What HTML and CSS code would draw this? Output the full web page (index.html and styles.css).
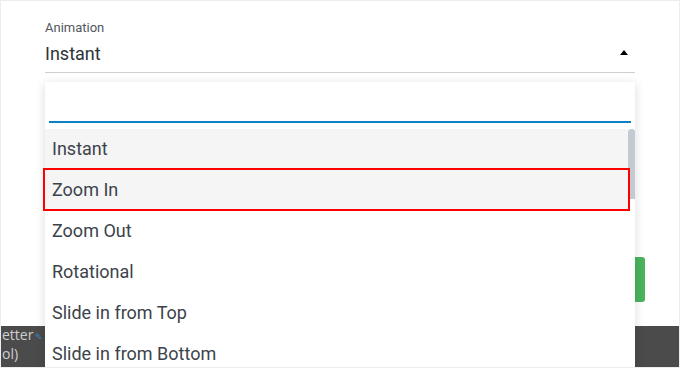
FILE: index.html
```html
<!DOCTYPE html>
<html>
<head>
<meta charset="utf-8">
<link rel="stylesheet" href="styles.css">
</head>
<body>
<div class="page">
  <div class="field">
    <div class="label">Animation</div>
    <div class="select">
      <span class="value">Instant</span>
      <span class="arrow"></span>
    </div>
  </div>
  <div class="btn-row">
    <div class="green-btn"></div>
  </div>
  <div class="footer">
    <div class="footer-text">
      <div class="ft-line">etter<span class="pencil">✎</span></div>
      <div class="ft-line">ol)</div>
    </div>
  </div>

  <div class="dropdown">
    <div class="search"><div class="search-input"></div></div>
    <div class="list">
      <div class="options">
        <div class="opt hl">Instant</div>
        <div class="opt hl">Zoom In</div>
        <div class="opt">Zoom Out</div>
        <div class="opt">Rotational</div>
        <div class="opt">Slide in from Top</div>
        <div class="opt">Slide in from Bottom</div>
      </div>
      <div class="scrollbar"><div class="thumb"></div></div>
    </div>
    <div class="redbox"></div>
  </div>
</div>
</body>
</html>
```

FILE: styles.css
```css
html, body {
  margin: 0;
  padding: 0;
  background: #fff;
}
.page {
  position: relative;
  width: 678px;
  height: 366px;
  border: 1px solid #ececec;
  overflow: hidden;
  display: flex;
  flex-direction: column;
  font-family: Roboto, "Liberation Sans", sans-serif;
  background: #fff;
}
.field {
  margin-left: 44px;
  width: 590px;
  padding-top: 19px;
}
.label {
  font-size: 13px;
  line-height: 16px;
  color: #50575e;
}
.select {
  display: flex;
  align-items: center;
  justify-content: space-between;
  padding: 7px 0;
  border-bottom: 1px solid #cfcfcf;
}
.value {
  font-size: 18px;
  line-height: 22px;
  color: #2c3338;
}
.arrow {
  width: 0;
  height: 0;
  border-left: 4px solid transparent;
  border-right: 4px solid transparent;
  border-bottom: 5px solid #000;
  margin-right: 7px;
  margin-top: -3px;
}
.btn-row {
  display: flex;
  justify-content: flex-end;
  margin-top: 184px;
  padding-right: 34px;
}
.green-btn {
  width: 120px;
  height: 45px;
  background: #4ab45c;
  border-radius: 3px;
}
.footer {
  margin-top: auto;
  height: 41px;
  background: #4b4b4b;
  display: flex;
}
.footer-text {
  width: 43px;
  padding-left: 1px;
}
.ft-line {
  white-space: nowrap;
  font-size: 14px;
  line-height: 17px;
  color: #cfcfcf;
  font-family: "Open Sans", "Liberation Sans", sans-serif;
}
.pencil {
  color: #3a88c2;
  font-size: 9px;
  margin-left: 2px;
}
.dropdown {
  position: absolute;
  left: 44px;
  top: 81px;
  width: 590px;
  height: 300px;
  background: #fff;
  box-shadow: 0 2px 10px rgba(0, 0, 0, 0.14);
}
.search {
  height: 47px;
  padding: 0 4px;
  box-sizing: border-box;
}
.search-input {
  height: 39px;
  border-bottom: 2px solid #0b82c4;
}
.list {
  display: flex;
}
.options {
  flex: 1;
}
.opt {
  height: 41px;
  line-height: 40px;
  padding-left: 7px;
  font-size: 18px;
  color: #3c434a;
}
.opt.hl {
  background: #f5f5f5;
}
.scrollbar {
  width: 7px;
}
.thumb {
  height: 70px;
  background: #c3cbd2;
  border-radius: 3px 3px 0 0;
}
.redbox {
  position: absolute;
  left: -2px;
  top: 86px;
  width: 583px;
  height: 39px;
  border: 2px solid #f00;
}
```
